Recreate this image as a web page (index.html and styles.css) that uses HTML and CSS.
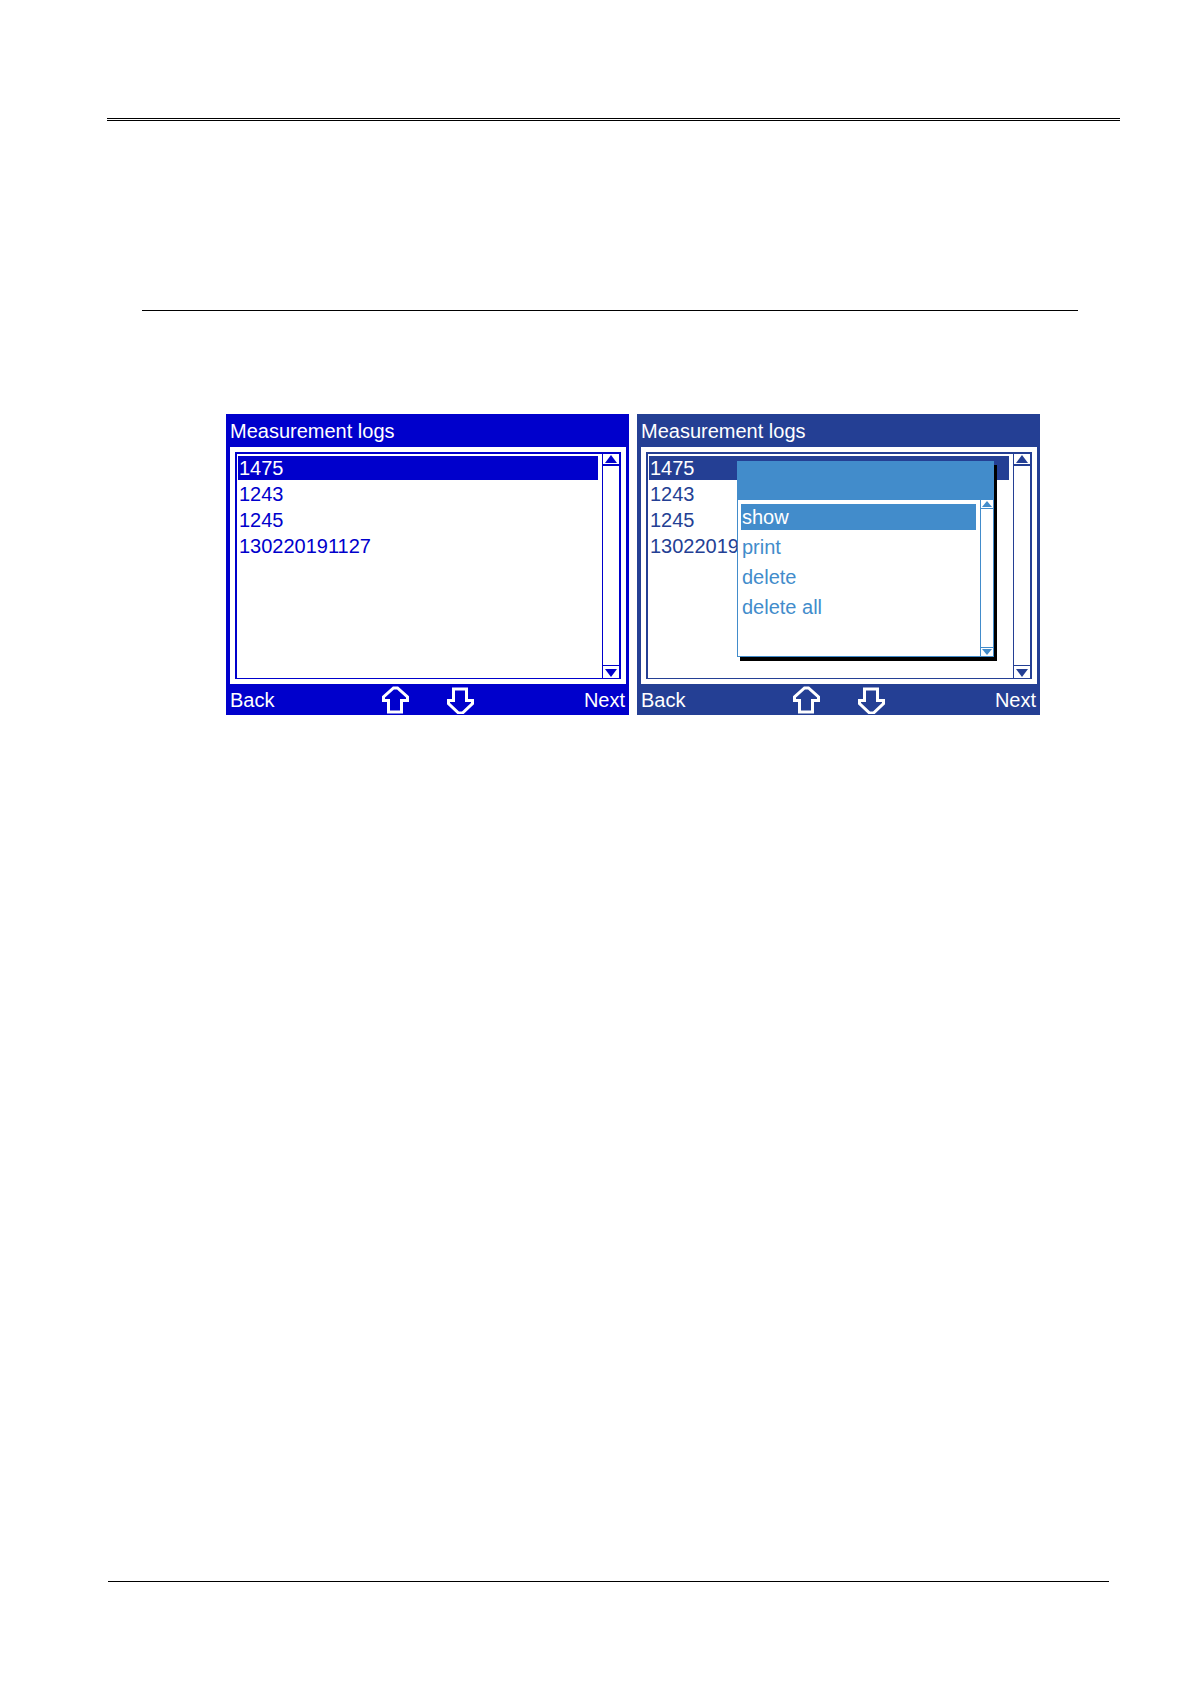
FILE: index.html
```html
<!DOCTYPE html>
<html lang="en">

<head>
    <meta charset="UTF-8">
    <meta name="viewport" content="width=device-width, initial-scale=1.0">
    <title>Measurement logs</title>
    <link rel="stylesheet" href="styles.css">
</head>

<body>
    <div class="page">
        <header class="page-header"></header>
        <hr class="section-rule">

        <main class="screens">
            <section class="screen">
                <h2 class="screen-title">Measurement logs</h2>
                <div class="panel">
                    <div class="frame">
                        <ul class="log-list">
                            <li><button type="button" class="row selected">1475</button></li>
                            <li><button type="button" class="row">1243</button></li>
                            <li><button type="button" class="row">1245</button></li>
                            <li><button type="button" class="row">130220191127</button></li>
                        </ul>
                        <div class="scrollbar">
                            <button type="button" class="scroll-btn" aria-label="Scroll up">
                                <svg viewBox="0 0 12 8"><path d="M6 0L12 8H0Z" /></svg>
                            </button>
                            <button type="button" class="scroll-btn down" aria-label="Scroll down">
                                <svg viewBox="0 0 12 8"><path d="M0 0H12L6 8Z" /></svg>
                            </button>
                        </div>
                    </div>
                </div>
                <div class="softkeys">
                    <button type="button" class="key">Back</button>
                    <div class="arrows">
                        <button type="button" class="arrow" aria-label="Up">
                            <svg viewBox="0 0 27 28"><path d="M11.500 2H15.500L25.500 11V14.500H19.500V26H6.500V14.500H1.500V11Z" /></svg>
                        </button>
                        <button type="button" class="arrow" aria-label="Down">
                            <svg viewBox="0 0 27 28"><path d="M6.500 3H19.500V14.500H25.500V17.500L15.500 27H11.500L1.500 17.500V14.500H6.500Z" /></svg>
                        </button>
                    </div>
                    <button type="button" class="key next">Next</button>
                </div>
            </section>

            <section class="screen muted">
                <h2 class="screen-title">Measurement logs</h2>
                <div class="panel">
                    <div class="frame">
                        <ul class="log-list">
                            <li><button type="button" class="row selected">1475</button></li>
                            <li><button type="button" class="row">1243</button></li>
                            <li><button type="button" class="row">1245</button></li>
                            <li><button type="button" class="row">13022019</button></li>
                        </ul>
                        <div class="scrollbar">
                            <button type="button" class="scroll-btn" aria-label="Scroll up">
                                <svg viewBox="0 0 12 8"><path d="M6 0L12 8H0Z" /></svg>
                            </button>
                            <button type="button" class="scroll-btn down" aria-label="Scroll down">
                                <svg viewBox="0 0 12 8"><path d="M0 0H12L6 8Z" /></svg>
                            </button>
                        </div>
                    </div>
                </div>
                <div class="softkeys">
                    <button type="button" class="key">Back</button>
                    <div class="arrows">
                        <button type="button" class="arrow" aria-label="Up">
                            <svg viewBox="0 0 27 28"><path d="M11.500 2H15.500L25.500 11V14.500H19.500V26H6.500V14.500H1.500V11Z" /></svg>
                        </button>
                        <button type="button" class="arrow" aria-label="Down">
                            <svg viewBox="0 0 27 28"><path d="M6.500 3H19.500V14.500H25.500V17.500L15.500 27H11.500L1.500 17.500V14.500H6.500Z" /></svg>
                        </button>
                    </div>
                    <button type="button" class="key next">Next</button>
                </div>

                <!-- Context menu -->
                <div class="popup">
                    <div class="popup-header"></div>
                    <div class="popup-body">
                        <ul class="popup-list">
                            <li><button type="button" class="row selected">show</button></li>
                            <li><button type="button" class="row">print</button></li>
                            <li><button type="button" class="row">delete</button></li>
                            <li><button type="button" class="row">delete all</button></li>
                        </ul>
                        <div class="scrollbar">
                            <button type="button" class="scroll-btn" aria-label="Scroll menu up">
                                <svg viewBox="0 0 10 6"><path d="M5 0L10 6H0Z" /></svg>
                            </button>
                            <button type="button" class="scroll-btn down" aria-label="Scroll menu down">
                                <svg viewBox="0 0 10 6"><path d="M0 0H10L5 6Z" /></svg>
                            </button>
                        </div>
                    </div>
                </div>
            </section>
        </main>

        <footer class="page-footer"></footer>
    </div>
</body>

</html>
```
FILE: styles.css
```css
* {
    box-sizing: border-box;
}

body {
    margin: 0;
    background-color: #fff;
    font-family: "Liberation Sans", Arial, sans-serif;
    font-size: 20px;
    line-height: 24px;
}

ul {
    list-style: none;
    margin: 0;
    padding: 0;
}

button {
    display: block;
    margin: 0;
    padding: 0;
    border: none;
    background: none;
    color: inherit;
    font: inherit;
    cursor: pointer;
}

svg {
    display: block;
}

/* Document page */
.page {
    display: flex;
    flex-direction: column;
    min-height: 100vh;
    padding: 118px 71px 101px 107px;
}

.page-header {
    border-top: 3px double #000;
}

.section-rule {
    margin: 189px 42px 103px 35px;
    border: none;
    border-top: 1px solid #000;
}

.page-footer {
    margin: auto 11px 0 1px;
    border-top: 1px solid #000;
}

/* Device screens */
.screens {
    display: grid;
    grid-template-columns: 1fr 1fr;
    gap: 8px;
    margin: 0 80px 0 119px;
}

.screen {
    --main: #0000cc;
    position: relative;
    background-color: var(--main);
    color: #fff;
}

.screen.muted {
    --main: #243f94;
}

.screen-title {
    margin: 0;
    padding: 5px 4px 4px;
    font-size: 20px;
    font-weight: normal;
}

.panel {
    margin: 0 3px 0 4px;
    padding: 5px;
    background-color: #fff;
}

.frame {
    display: flex;
    min-height: 227px;
    border: 2px solid var(--main);
    border-bottom-width: 1px;
    color: var(--main);
}

.log-list {
    display: grid;
    align-content: start;
    gap: 2px;
    flex: 1;
    padding: 2px 4px 0 1px;
}

.row {
    width: 100%;
    padding-left: 1px;
    text-align: left;
}

.row.selected {
    background-color: var(--main);
    color: #fff;
}

.scrollbar {
    display: flex;
    flex-direction: column;
    justify-content: space-between;
    width: 17px;
    border-left: 1px solid var(--main);
}

.scroll-btn {
    height: 12px;
    padding: 1px 2px;
    border-bottom: 2px solid var(--main);
}

.scroll-btn.down {
    height: 13px;
    padding-top: 2px;
    border-top: 1px solid var(--main);
    border-bottom: none;
}

.scroll-btn svg {
    width: 12px;
    height: 8px;
    fill: var(--main);
}

.softkeys {
    display: grid;
    grid-template-columns: 1fr auto 1fr;
    align-items: center;
    height: 31px;
    padding: 0 4px;
}

.key {
    justify-self: start;
}

.key.next {
    justify-self: end;
}

.arrows {
    display: flex;
    gap: 38px;
}

.arrow svg {
    width: 27px;
    height: 28px;
    fill: none;
    stroke: #fff;
    stroke-width: 3;
}

/* Popup over the second screen */
.popup {
    --main: #428ccb;
    position: absolute;
    top: 47px;
    left: 100px;
    right: 46px;
    border: 1px solid var(--main);
    background-color: #fff;
    box-shadow: 3px 4px 0 #000;
    color: var(--main);
}

.popup-header {
    height: 38px;
    background-color: var(--main);
}

.popup-body {
    display: flex;
    min-height: 156px;
}

.popup-list {
    display: grid;
    align-content: start;
    gap: 4px;
    flex: 1;
    padding: 4px 4px 0 3px;
}

.popup .row {
    line-height: 26px;
}

.popup .scrollbar {
    width: 13px;
}

.popup .scroll-btn {
    height: 9px;
    padding: 1px;
    border-bottom-width: 1px;
}

.popup .scroll-btn svg {
    width: 10px;
    height: 6px;
}
```
